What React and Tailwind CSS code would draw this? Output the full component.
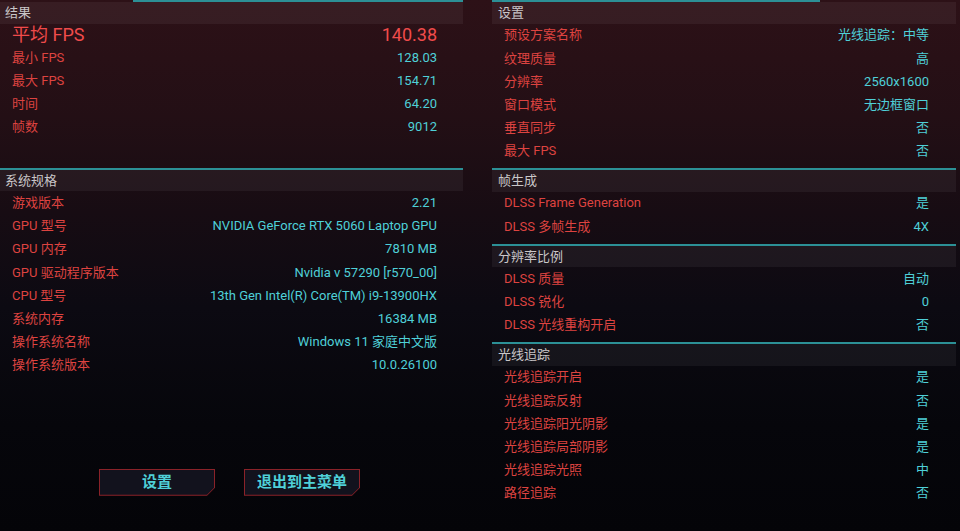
import React from "react";

const results = [
  { label: "最小 FPS", value: "128.03" },
  { label: "最大 FPS", value: "154.71" },
  { label: "时间", value: "64.20" },
  { label: "帧数", value: "9012" },
];

const specs = [
  { label: "游戏版本", value: "2.21" },
  { label: "GPU 型号", value: "NVIDIA GeForce RTX 5060 Laptop GPU" },
  { label: "GPU 内存", value: "7810 MB" },
  { label: "GPU 驱动程序版本", value: "Nvidia v 57290 [r570_00]" },
  { label: "CPU 型号", value: "13th Gen Intel(R) Core(TM) i9-13900HX" },
  { label: "系统内存", value: "16384 MB" },
  { label: "操作系统名称", value: "Windows 11 家庭中文版" },
  { label: "操作系统版本", value: "10.0.26100" },
];

const settings = [
  {
    title: "设置",
    rows: [
      { label: "预设方案名称", value: "光线追踪：中等" },
      { label: "纹理质量", value: "高" },
      { label: "分辨率", value: "2560x1600" },
      { label: "窗口模式", value: "无边框窗口" },
      { label: "垂直同步", value: "否" },
      { label: "最大 FPS", value: "否" },
    ],
  },
  {
    title: "帧生成",
    rows: [
      { label: "DLSS Frame Generation", value: "是" },
      { label: "DLSS 多帧生成", value: "4X" },
    ],
  },
  {
    title: "分辨率比例",
    rows: [
      { label: "DLSS 质量", value: "自动" },
      { label: "DLSS 锐化", value: "0" },
      { label: "DLSS 光线重构开启", value: "否" },
    ],
  },
  {
    title: "光线追踪",
    rows: [
      { label: "光线追踪开启", value: "是" },
      { label: "光线追踪反射", value: "否" },
      { label: "光线追踪阳光阴影", value: "是" },
      { label: "光线追踪局部阴影", value: "是" },
      { label: "光线追踪光照", value: "中" },
      { label: "路径追踪", value: "否" },
    ],
  },
];

function Row({ label, value, pr }) {
  return (
    <div className={`flex h-[23.2px] items-center justify-between pl-[12px] ${pr}`}>
      <span className="text-[#dd4340]">{label}</span>
      <span className="text-[#4fd0d8]">{value}</span>
    </div>
  );
}

function Header({ title, pl }) {
  return (
    <div className={`flex h-[21.5px] items-center bg-white/[0.05] text-[13px] text-[#c9c6c8] ${pl}`}>
      {title}
    </div>
  );
}

function CutButton({ children }) {
  return (
    <div className="h-[27px] w-[116px] bg-[#8a2229] p-[1px] [clip-path:polygon(0_0,116px_0,116px_19px,108px_27px,0_27px)]">
      <button className="flex h-full w-full items-center justify-center bg-[#12121d] text-[15px] font-bold text-[#4fd0d8] [clip-path:polygon(0_0,114px_0,114px_18px,107px_25px,0_25px)]">
        {children}
      </button>
    </div>
  );
}

export default function App() {
  return (
    <div
      className="flex h-[531px] w-full overflow-hidden bg-[linear-gradient(180deg,#2d1117_0%,#230f15_22%,#170c13_40%,#0c0a12_58%,#06060b_80%,#040408_100%)] text-[13px]"
      style={{ fontFamily: "Roboto, 'Noto Sans CJK SC', sans-serif" }}
    >
      {/* left column: results + system specs */}
      <div className="flex w-[463px] flex-col">
        <div className="ml-[133px] h-[2px] bg-[#2c9096]" />
        <Header title="结果" pl="pl-[5px]" />
        <div className="flex h-[22.5px] items-center justify-between pl-[12px] pr-[26px] text-[18px] text-[#f04b4b]">
          <span>平均 FPS</span>
          <span>140.38</span>
        </div>
        {results.map((r) => (
          <Row key={r.label} label={r.label} value={r.value} pr="pr-[26px]" />
        ))}
        <div className="mt-[29px] h-[2px] bg-[#2c9096]" />
        <Header title="系统规格" pl="pl-[5px]" />
        {specs.map((r) => (
          <Row key={r.label} label={r.label} value={r.value} pr="pr-[26px]" />
        ))}
        <div className="mt-[92px] flex justify-center gap-[29px] pr-[4px]">
          <CutButton>设置</CutButton>
          <CutButton>退出到主菜单</CutButton>
        </div>
      </div>

      {/* right column: settings */}
      <div className="ml-[29px] flex w-[464px] flex-col">
        {settings.map((section, i) => (
          <div key={section.title} className="pb-[5.5px]">
            <div className={i === 0 ? "mr-[136px] h-[2px] bg-[#2c9096]" : "h-[2px] bg-[#2c9096]"} />
            <Header title={section.title} pl="pl-[6px]" />
            {section.rows.map((r) => (
              <Row key={r.label} label={r.label} value={r.value} pr="pr-[27px]" />
            ))}
          </div>
        ))}
      </div>
    </div>
  );
}
